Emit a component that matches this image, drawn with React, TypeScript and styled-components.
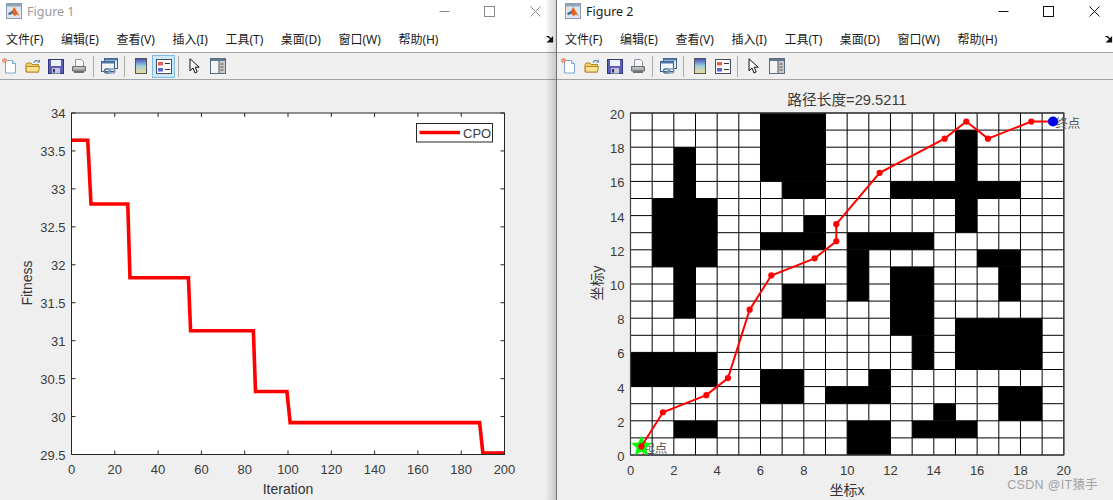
// MATLAB figure windows: fitness curve on the left, grid path on the right
import React from "react";
import styled, { createGlobalStyle } from "styled-components";

// -------------------- Data --------------------
const MENU = ["文件(F)", "编辑(E)", "查看(V)", "插入(I)", "工具(T)", "桌面(D)", "窗口(W)", "帮助(H)"];

const CURVE: [number, number][] = [
  [0, 33.64], [7.5, 33.64], [9, 32.8], [26, 32.8], [27, 31.83], [54, 31.83], [55, 31.13],
  [84, 31.13], [85, 30.33], [99.5, 30.33], [101, 29.92], [188.5, 29.92], [190, 29.52], [200, 29.52],
];

// [x, y, w, h] in grid cells
const OBSTACLES: [number, number, number, number][] = [
  [6, 16, 3, 4], [7, 15, 2, 1], [2, 8, 1, 10], [1, 11, 3, 4], [6, 12, 3, 1], [8, 13, 1, 1],
  [12, 15, 6, 1], [15, 13, 1, 6], [10, 12, 4, 1], [10, 9, 1, 3], [12, 7, 2, 4], [13, 5, 1, 2],
  [16, 11, 2, 1], [17, 9, 1, 2], [15, 5, 4, 3], [7, 8, 2, 2], [9, 3, 3, 1], [11, 4, 1, 1],
  [10, 0, 2, 2], [13, 1, 3, 1], [14, 2, 1, 1], [17, 2, 2, 2], [0, 4, 4, 2], [2, 1, 2, 1], [6, 3, 2, 2],
];

const PATH: [number, number][] = [
  [0.5, 0.5], [1.5, 2.5], [3.5, 3.5], [4.5, 4.5], [5.5, 8.5], [6.5, 10.5], [8.5, 11.5], [9.5, 12.5],
  [9.5, 13.5], [11.5, 16.5], [14.5, 18.5], [15.5, 19.5], [16.5, 18.5], [18.5, 19.5], [19.5, 19.5],
];

// -------------------- Custom Style using styled-component --------------------
const GlobalStyle = createGlobalStyle`
  html, body {
    margin: 0;
    padding: 0;
    background: #f0f0f0;
    overflow: hidden;
  }
`;

const Desktop = styled.div`
  display: flex;
  width: 1113px;
  height: 500px;
  font-family: "Noto Sans", "Noto Sans CJK SC", sans-serif;
`;

const Window = styled.section<{ $back?: boolean }>`
  position: relative;
  display: flex;
  flex-direction: column;
  flex: ${props => (props.$back ? "0 0 556px" : "1 1 0")};
  min-width: 0;
  border-left: ${props => (props.$back ? "none" : "1px solid #6f6f6f")};
  background: #f0f0f0;

  /* shadow the front window throws on the one behind it */
  &::after {
    content: "";
    display: ${props => (props.$back ? "block" : "none")};
    position: absolute;
    top: 0;
    right: 0;
    bottom: 0;
    width: 11px;
    background: linear-gradient(to right, rgba(0, 0, 0, 0), rgba(0, 0, 0, 0.16));
    pointer-events: none;
  }
`;

const TitleBar = styled.div<{ $back?: boolean }>`
  display: flex;
  align-items: center;
  height: 22px;
  padding-left: ${props => (props.$back ? "6px" : "8px")};
  margin-right: ${props => (props.$back ? "-1.75px" : "-3.75px")};
  background: #fff;
`;

const TitleText = styled.span<{ $back?: boolean }>`
  flex: 1;
  margin-left: 5px;
  font-size: 12.5px;
  color: ${props => (props.$back ? "#9a9a9a" : "#1a1a1a")};
`;

const Caption = styled.button<{ $back?: boolean }>`
  display: flex;
  align-items: center;
  justify-content: center;
  width: 45.5px;
  height: 22px;
  padding: 0;
  border: none;
  background: none;
  color: ${props => (props.$back ? "#8a8a8a" : "#111")};
`;

const MenuBar = styled.div<{ $back?: boolean }>`
  display: flex;
  align-items: center;
  gap: 17.6px;
  height: 26px;
  padding: 4px ${props => (props.$back ? "2.5px" : "0.5px")} 0 ${props => (props.$back ? "6px" : "8px")};
  border-bottom: 1px solid #a3a3a3;
  background: #fff;
`;

const MenuItem = styled.span`
  font-size: 12px;
  color: #1a1a1a;
  white-space: nowrap;
`;

const MenuOverflow = styled.span`
  display: flex;
  margin-left: auto;
`;

const ToolBar = styled.div<{ $back?: boolean }>`
  display: flex;
  align-items: center;
  height: 26px;
  padding-left: ${props => (props.$back ? "0" : "2px")};
  border-bottom: 1px solid #a3a3a3;
  background: #f0f0f0;
`;

const ToolButton = styled.span<{ $on?: boolean; $first?: boolean }>`
  display: flex;
  align-items: center;
  justify-content: center;
  width: 23px;
  height: 23px;
  box-sizing: border-box;
  margin-left: ${props => (props.$first ? "-2px" : "0")};
  border: 1px solid ${props => (props.$on ? "#7fbde8" : "transparent")};
  background: ${props => (props.$on ? "#cfe6f7" : "transparent")};
`;

const ToolSeparator = styled.span`
  width: 1px;
  height: 21px;
  margin: 0 4px 0 3px;
  background: #a9a9a9;
`;

const Canvas = styled.div`
  flex: 1;
  min-height: 0;
  background: #efefef;
`;

const PlotSvg = styled.svg`
  display: block;
  width: 100%;
  height: 100%;
`;

const AxisText = styled.text`
  font-family: "Liberation Sans", Arial, sans-serif;
  font-size: 13px;
  fill: #3a3a3a;
`;

const AxisLabel = styled.text`
  font-family: "Liberation Sans", "Noto Sans CJK SC", sans-serif;
  font-size: 14px;
  fill: #333;
`;

const PlotTitle = styled(AxisLabel)`
  font-size: 14.7px;
  fill: #3c3c3c;
`;

const PointLabel = styled.text`
  font-family: "Noto Sans CJK SC", sans-serif;
  font-size: 12.5px;
  fill: #555;
`;

const Watermark = styled.span`
  position: absolute;
  right: 15px;
  bottom: 7px;
  font-family: "Liberation Sans", "Noto Sans CJK SC", sans-serif;
  font-size: 12.5px;
  letter-spacing: 0.3px;
  color: #a2a2a2;
`;

// -------------------- Toolbar and title icons --------------------
const MatlabIcon = () => (
  <svg width="16" height="16" viewBox="0 0 16 16">
    <rect x="0.5" y="0.5" width="15" height="15" fill="#dfe5ec" stroke="#8f9cad" />
    <rect x="1" y="1" width="14" height="2.500" fill="#8ea3bc" />
    <path d="M2 10.500 6 8l2.200-4L10 7l3.500 6L11 11.500 8.500 13 6 10.500 3.500 12z" fill="#e2651f" />
    <path d="M2 10.500 6 8l1 2-1 .5L3.500 12z" fill="#2f6eb0" />
  </svg>
);

const MinimizeIcon = () => (
  <svg width="11" height="11" viewBox="0 0 11 11"><path d="M0.5 5.500h10" stroke="currentColor" /></svg>
);
const MaximizeIcon = () => (
  <svg width="11" height="11" viewBox="0 0 11 11"><rect x="0.5" y="0.5" width="10" height="10" fill="none" stroke="currentColor" /></svg>
);
const CloseIcon = () => (
  <svg width="11" height="11" viewBox="0 0 11 11"><path d="M0.5 0.5l10 10M10.500 0.5l-10 10" stroke="currentColor" /></svg>
);

const OverflowIcon = () => (
  <svg width="8" height="8" viewBox="0 0 8 8"><path d="M0.500 1.500h2l3 3M6.500 2.500v4.500h-4.500z" stroke="#111" strokeWidth="1.200" fill="#111" /></svg>
);

const NewIcon = () => (
  <svg width="16" height="16" viewBox="0 0 16 16">
    <path d="M3.500 2.500h7l3 3v9.500h-10z" fill="#fdfeff" stroke="#7fa8cf" />
    <path d="M10.500 2.500v3h3" fill="#dbe8f4" stroke="#7fa8cf" />
    <circle cx="2.500" cy="2.500" r="2" fill="#f4a582" stroke="#e2703a" strokeWidth="0.700" />
  </svg>
);
const OpenIcon = () => (
  <svg width="16" height="16" viewBox="0 0 16 16">
    <path d="M1 6.500v7.500h12.500V6.500H7L6 5H2z" fill="#f3cf6b" stroke="#b58a26" />
    <path d="M1 8.500h13.500l-1 5.500H1.500z" fill="#fbe593" stroke="#b58a26" />
    <path d="M9 4.500c1-2 3-2.500 4.500-1.500" fill="none" stroke="#5f86b3" strokeWidth="1.200" />
    <path d="M15 1.500v3h-3z" fill="#5f86b3" />
  </svg>
);
const SaveIcon = () => (
  <svg width="16" height="16" viewBox="0 0 16 16">
    <rect x="0.500" y="1.500" width="15" height="14" fill="#5a5fb5" stroke="#33367c" />
    <rect x="3" y="2" width="10" height="6" fill="#eef0fa" />
    <rect x="4" y="10" width="8" height="5.500" fill="#c4c6d6" />
    <rect x="5" y="11" width="2" height="3.500" fill="#33367c" />
  </svg>
);
const PrintIcon = () => (
  <svg width="16" height="16" viewBox="0 0 16 16">
    <path d="M4.500 1.500h6l2 2v5h-8z" fill="#f4f6f8" stroke="#8a96a3" />
    <path d="M1.500 8.500h13v4.500h-13z" fill="#a5a8aa" stroke="#6c7073" />
    <path d="M3 13h10v2H3z" fill="#6c7073" />
    <path d="M3 10h10" stroke="#d6d8da" />
  </svg>
);
const LinkIcon = () => (
  <svg width="17" height="17" viewBox="0 0 17 17">
    <rect x="3.500" y="0.500" width="13" height="10" fill="#e8eef5" stroke="#3f5f86" />
    <rect x="3.500" y="0.500" width="13" height="2" fill="#4c76a8" />
    <rect x="0.500" y="3.500" width="13" height="10" fill="#f4f7fa" stroke="#3f5f86" />
    <rect x="0.500" y="3.500" width="13" height="2" fill="#4c76a8" />
    <rect x="3.500" y="11" width="6" height="4" rx="2" fill="none" stroke="#4d6f96" strokeWidth="1.400" />
    <rect x="8" y="11" width="6" height="4" rx="2" fill="none" stroke="#8aa2bd" strokeWidth="1.400" />
  </svg>
);
const ColorbarIcon = () => (
  <svg width="12" height="16" viewBox="0 0 12 16">
    <defs>
      <linearGradient id="bar" x1="0" y1="0" x2="0" y2="1">
        <stop offset="0" stopColor="#3f4bb8" />
        <stop offset="0.500" stopColor="#9fd0e0" />
        <stop offset="1" stopColor="#f4d98b" />
      </linearGradient>
    </defs>
    <rect x="0.500" y="0.500" width="11" height="15" fill="url(#bar)" stroke="#555" />
  </svg>
);
const LegendIcon = () => (
  <svg width="16" height="15" viewBox="0 0 16 15">
    <rect x="0.500" y="0.500" width="15" height="14" fill="#fff" stroke="#44505c" />
    <rect x="2" y="3" width="5" height="3.500" fill="#ea5b5b" />
    <rect x="2" y="9" width="5" height="3.500" fill="#5a62d8" />
    <path d="M9 4.500h5M9 10.500h5" stroke="#333" />
  </svg>
);
const PointerIcon = () => (
  <svg width="11" height="16" viewBox="0 0 11 16">
    <path d="M1 0.800v12l3-2.800 2 5 2.200-1-2-4.800h4z" fill="#fff" stroke="#111" />
  </svg>
);
const PanelIcon = () => (
  <svg width="16" height="16" viewBox="0 0 16 16">
    <rect x="0.500" y="0.500" width="15" height="15" fill="#f4f4f4" stroke="#5d6b78" />
    <rect x="1" y="1" width="14" height="2" fill="#5d7b96" />
    <rect x="9" y="3" width="6" height="12" fill="#c9c9c9" />
    <path d="M9 3v12M10.500 6h3M10.500 9h3M10.500 12h3" stroke="#555" />
  </svg>
);

// -------------------- Window chrome --------------------
interface FigureProps {
  title: string;
  back?: boolean;
  children: React.ReactNode;
}

const Figure = ({ title, back, children }: FigureProps): JSX.Element => (
  <Window $back={back}>
    <TitleBar $back={back}>
      <MatlabIcon />
      <TitleText $back={back}>{title}</TitleText>
      <Caption $back={back}><MinimizeIcon /></Caption>
      <Caption $back={back}><MaximizeIcon /></Caption>
      <Caption $back={back}><CloseIcon /></Caption>
    </TitleBar>
    <MenuBar $back={back}>
      {MENU.map(item => <MenuItem key={item}>{item}</MenuItem>)}
      <MenuOverflow><OverflowIcon /></MenuOverflow>
    </MenuBar>
    <ToolBar $back={back}>
      <ToolButton $first><NewIcon /></ToolButton>
      <ToolButton><OpenIcon /></ToolButton>
      <ToolButton><SaveIcon /></ToolButton>
      <ToolButton><PrintIcon /></ToolButton>
      <ToolSeparator />
      <ToolButton><LinkIcon /></ToolButton>
      <ToolSeparator />
      <ToolButton><ColorbarIcon /></ToolButton>
      <ToolButton $on={back}><LegendIcon /></ToolButton>
      <ToolSeparator />
      <ToolButton><PointerIcon /></ToolButton>
      <ToolButton><PanelIcon /></ToolButton>
    </ToolBar>
    <Canvas>{children}</Canvas>
  </Window>
);

// -------------------- Fitness plot --------------------
const FitnessPlot = (): JSX.Element => {
  const L = 71.5, R = 504.5, T = 33, B = 374.5;
  const sx = (v: number) => L + (v / 200) * (R - L);
  const sy = (v: number) => B - ((v - 29.5) / 4.5) * (B - T);
  const xTicks = [0, 20, 40, 60, 80, 100, 120, 140, 160, 180, 200];
  const yTicks = [29.5, 30, 30.5, 31, 31.5, 32, 32.5, 33, 33.5, 34];

  return (
    <PlotSvg>
      <rect x={L} y={T} width={R - L} height={B - T} fill="#fff" />
      <polyline
        points={CURVE.map(([x, y]) => `${sx(x)},${sy(y)}`).join(" ")}
        fill="none"
        stroke="#ff0000"
        strokeWidth="3.6"
      />
      <rect x={L} y={T} width={R - L} height={B - T} fill="none" stroke="#262626" />
      {xTicks.map(v => (
        <g key={v}>
          <path d={`M${sx(v)} ${B}v-4M${sx(v)} ${T}v4`} stroke="#262626" />
          <AxisText x={sx(v)} y={B + 19} textAnchor="middle">{v}</AxisText>
        </g>
      ))}
      {yTicks.map(v => (
        <g key={v}>
          <path d={`M${L} ${sy(v)}h4M${R} ${sy(v)}h-4`} stroke="#262626" />
          <AxisText x={L - 6} y={sy(v) + 5} textAnchor="end">{v}</AxisText>
        </g>
      ))}
      <AxisLabel x={288} y={414} textAnchor="middle">Iteration</AxisLabel>
      <AxisLabel transform="translate(32 203) rotate(-90)" textAnchor="middle">Fitness</AxisLabel>
      <rect x={416.5} y={43.5} width={76} height={18.5} fill="#fff" stroke="#262626" />
      <path d="M419.500 52.500H460" stroke="#ff0000" strokeWidth="3.600" />
      <AxisText x={463} y={57.5}>CPO</AxisText>
    </PlotSvg>
  );
};

// -------------------- Grid path plot --------------------
const starPoints = (cx: number, cy: number, outer: number, inner: number): string =>
  Array.from({ length: 10 }, (_, i) => {
    const r = i % 2 === 0 ? outer : inner;
    const a = -Math.PI / 2 + (i * Math.PI) / 5;
    return `${cx + r * Math.cos(a)},${cy + r * Math.sin(a)}`;
  }).join(" ");

const PathPlot = (): JSX.Element => {
  const L = 73.5, R = 506.8, T = 33, B = 375;
  const sx = (v: number) => L + (v / 20) * (R - L);
  const sy = (v: number) => B - (v / 20) * (B - T);
  const cells = Array.from({ length: 21 }, (_, i) => i);
  const ticks = [0, 2, 4, 6, 8, 10, 12, 14, 16, 18, 20];

  return (
    <PlotSvg>
      <rect x={L} y={T} width={R - L} height={B - T} fill="#fff" />
      {OBSTACLES.map(([x, y, w, h]) => (
        <rect key={`${x}-${y}`} x={sx(x)} y={sy(y + h)} width={sx(w) - L} height={B - sy(h)} fill="#000" />
      ))}
      {cells.map(i => <path key={`v${i}`} d={`M${sx(i)} ${T}V${B}`} stroke="#000" strokeWidth="1" />)}
      {cells.map(i => <path key={`h${i}`} d={`M${L} ${sy(i)}H${R}`} stroke="#000" strokeWidth="1" />)}
      <rect x={L} y={T} width={R - L} height={B - T} fill="none" stroke="#404040" strokeWidth="1.2" />
      {ticks.map(v => (
        <g key={v}>
          <AxisText x={sx(v)} y={B + 20} textAnchor="middle">{v}</AxisText>
          <AxisText x={L - 6} y={sy(v) + 6} textAnchor="end">{v}</AxisText>
        </g>
      ))}
      <PlotTitle x={290} y={25} textAnchor="middle">路径长度=29.5211</PlotTitle>
      <AxisLabel x={290} y={415} textAnchor="middle">坐标x</AxisLabel>
      <AxisLabel transform="translate(45 203) rotate(-90)" textAnchor="middle">坐标y</AxisLabel>
      <PointLabel x={sx(0.5) + 1} y={sy(0.5) + 7}>起点</PointLabel>
      <PointLabel x={sx(19.6)} y={sy(19.5) + 6}>终点</PointLabel>
      <polygon points={starPoints(sx(0.5), sy(0.5), 11, 5)} fill="#00ff00" />
      <polyline
        points={PATH.map(([x, y]) => `${sx(x)},${sy(y)}`).join(" ")}
        fill="none"
        stroke="#ff0000"
        strokeWidth="2"
      />
      {PATH.map(([x, y]) => <circle key={`${x}-${y}`} cx={sx(x)} cy={sy(y)} r="3.1" fill="#ff0000" />)}
      <circle cx={sx(19.5)} cy={sy(19.5)} r="5" fill="#0000e6" />
    </PlotSvg>
  );
};

// -------------------- Page --------------------
const App = (): JSX.Element => (
  <Desktop>
    <GlobalStyle />
    <Figure title="Figure 1" back>
      <FitnessPlot />
    </Figure>
    <Figure title="Figure 2">
      <PathPlot />
      <Watermark>CSDN @IT猿手</Watermark>
    </Figure>
  </Desktop>
);

export default App;
